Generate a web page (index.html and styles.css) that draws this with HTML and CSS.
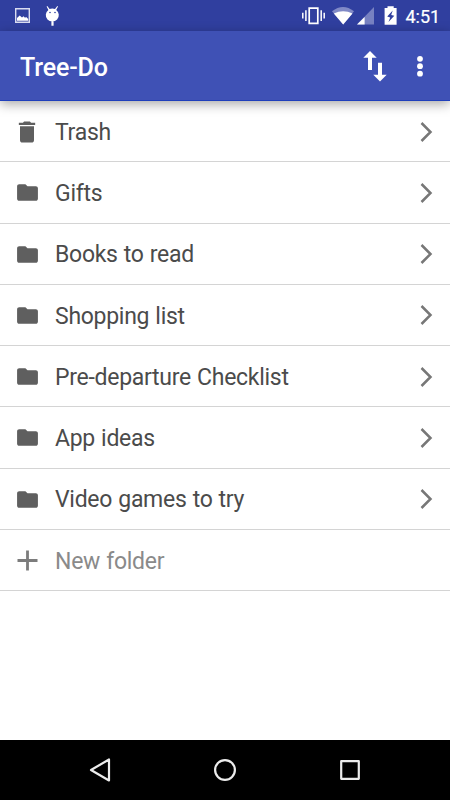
FILE: index.html
```html
<!DOCTYPE html>
<html lang="en">
<head>
<meta charset="utf-8">
<title>Tree-Do</title>
<link rel="stylesheet" href="styles.css">
</head>
<body>
<svg class="defs" width="0" height="0">
  <symbol id="folder" viewBox="0 0 24 24"><path d="M10 4H4c-1.100 0-2 .9-2 2v12c0 1.100.9 2 2 2h16c1.100 0 2-.9 2-2V8c0-1.100-.9-2-2-2h-8z"/></symbol>
  <symbol id="chevron" viewBox="0 0 14 22"><path d="M2.500 2l9 9-9 9"/></symbol>
</svg>
<div class="screen">
  <div class="status">
    <svg width="300" height="31" viewBox="0 0 300 31">
      <path d="M15.700 8.700h13.600v13.600H15.700z" fill="none" stroke="#d9dcf0" stroke-width="1.400"/>
      <path d="M17 20.700v-2.700l2.700-2.500 2.300 2 1.500-1.300 1.500 1.500 1.200-.7 2 2v1.700z" fill="#fff"/>
      <path d="M47.300 6l2.300 3a7 7 0 0 1 5.400 0l2.300-3 .7.500-1.800 3.400a6.500 6.500 0 1 1-7.800 0l-1.800-3.400zM51.400 20.500h2.200v5.300h-2.200z" fill="#fff"/>
      <circle cx="50" cy="12.500" r=".8" fill="#303f9f"/><circle cx="55" cy="12.500" r=".8" fill="#303f9f"/>
    </svg>
    <svg width="100" height="31" viewBox="300 0 100 31">
      <path d="M309.200 8.100h8.600v15.300h-8.600z" fill="none" stroke="#fff" stroke-width="1.700"/>
      <path d="M305.900 10.300v10.700M302.800 12.700v5.900M321.200 10.300v10.700M324.200 12.700v5.900" stroke="#fff" stroke-width="1.500"/>
      <path d="M332 11.300Q343 2.700 354 11.300L343.200 24.600z" fill="#8089c6"/>
      <path d="M333.800 13.400q9.300-4.500 18.700 0l-9.300 11.200z" fill="#fff"/>
      <path d="M357 24.600L374 7v17.600z" fill="#7781c1"/>
      <path d="M357 24.600l7.600-7.700v7.700z" fill="#fff"/>
      <path d="M387.500 6.300h6.200v1.800h2.900v16.600h-12V8.100h2.900z" fill="#fff"/>
      <path d="M392.700 10.500l-5.500 6.100 3 .8-1.700 4.600 5.800-6.300-3.100-.8z" fill="#303f9f"/>
    </svg>
    <span class="clock">4:51</span>
  </div>
  <header class="bar">
    <h1>Tree-Do</h1>
    <svg width="110" height="70" viewBox="340 31 110 70" fill="#fff">
      <path d="M370 51l6.700 6.800h-4.700V70h-4V57.800h-4.700zM380 81.500l-6.700-6.800h4.700V62.800h4v11.900h4.700z"/>
      <circle cx="420" cy="58.800" r="2.900"/><circle cx="420" cy="66.200" r="2.900"/><circle cx="420" cy="73.700" r="2.900"/>
    </svg>
  </header>
  <main class="list">
    <div class="row"><svg class="icon trash" viewBox="0 0 24 24"><path d="M6 19c0 1.100.9 2 2 2h8c1.100 0 2-.9 2-2V7H6zM19 4h-3.500l-1-1h-5l-1 1H5v2h14z"/></svg><span class="name">Trash</span><svg class="chevron"><use href="#chevron"/></svg></div>
    <div class="row"><svg class="icon"><use href="#folder"/></svg><span class="name">Gifts</span><svg class="chevron"><use href="#chevron"/></svg></div>
    <div class="row"><svg class="icon"><use href="#folder"/></svg><span class="name">Books to read</span><svg class="chevron"><use href="#chevron"/></svg></div>
    <div class="row"><svg class="icon"><use href="#folder"/></svg><span class="name">Shopping list</span><svg class="chevron"><use href="#chevron"/></svg></div>
    <div class="row"><svg class="icon"><use href="#folder"/></svg><span class="name">Pre-departure Checklist</span><svg class="chevron"><use href="#chevron"/></svg></div>
    <div class="row"><svg class="icon"><use href="#folder"/></svg><span class="name">App ideas</span><svg class="chevron"><use href="#chevron"/></svg></div>
    <div class="row"><svg class="icon"><use href="#folder"/></svg><span class="name">Video games to try</span><svg class="chevron"><use href="#chevron"/></svg></div>
    <div class="row new"><svg class="icon" viewBox="0 0 25 25"><path d="M12.500 2.500v20M2.500 12.500h20" fill="none" stroke="#7c7c7c" stroke-width="2.800"/></svg><span class="name">New folder</span></div>
  </main>
  <nav class="nav">
    <svg width="450" height="60" viewBox="0 740 450 60" fill="none" stroke="#ececec" stroke-width="2.200" stroke-linejoin="round">
      <path d="M109 759.500v21L91 770z"/>
      <circle cx="225" cy="770" r="9.900"/>
      <path d="M341.200 761.200h17.600v17.600h-17.600z"/>
    </svg>
  </nav>
</div>
</body>
</html>
```
FILE: styles.css
```css
body {
  margin: 0;
  font-family: Roboto, sans-serif;
}

svg {
  display: block;
  flex: none;
}

.defs {
  position: absolute;
}

.screen {
  width: 450px;
  height: 800px;
  display: flex;
  flex-direction: column;
  overflow: hidden;
  background: #fff;
}

.status {
  height: 31px;
  flex: none;
  display: flex;
  align-items: center;
  background: #303f9f;
}

.clock {
  margin-left: 5.5px;
  padding-top: 2px;
  color: #fff;
  font-size: 18px;
  line-height: 20px;
  -webkit-text-stroke: 0.2px #fff;
}

.bar {
  height: 70px;
  flex: none;
  box-sizing: border-box;
  padding-left: 20px;
  display: flex;
  align-items: center;
  justify-content: space-between;
  background: #3f51b5;
  border-bottom: 1px solid #1f3fbb;
  box-shadow: 0 3px 11px rgba(0, 0, 0, 0.35);
  z-index: 1;
}

.bar h1 {
  margin: 5px 0 0;
  color: #fff;
  font-size: 25px;
  font-weight: 500;
  line-height: 30px;
  letter-spacing: -0.15px;
}

.list {
  flex: 1;
}

.row {
  height: 61.25px;
  box-sizing: border-box;
  padding: 1px 17px 0 15px;
  display: flex;
  align-items: center;
  border-bottom: 1px solid #d4d4d4;
  color: #4b4b4b;
}

.icon {
  width: 25px;
  height: 25px;
  fill: #5f5f5f;
}

.trash {
  width: 28px;
  height: 28px;
  margin: 0 -1px 0 -2px;
}

.name {
  flex: 1;
  margin: 2.5px 0 0 15px;
  font-size: 23px;
  line-height: 30px;
  letter-spacing: -0.28px;
  word-spacing: 0.7px;
}

.new {
  color: #8a8a8a;
}

.chevron {
  width: 14px;
  height: 22px;
  fill: none;
  stroke: #777;
  stroke-width: 2.5;
}

.nav {
  height: 60px;
  flex: none;
  background: #000;
}
```
